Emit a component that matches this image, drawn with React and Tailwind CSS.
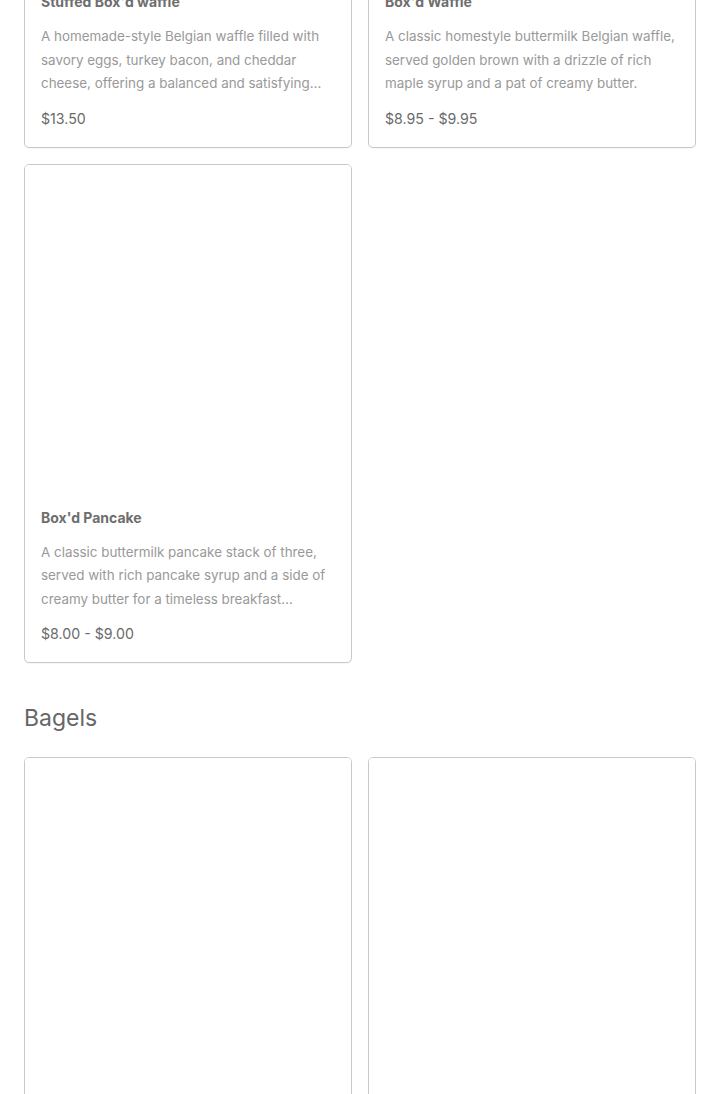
const SECTIONS = [
  {
    name: null,
    items: [
      {
        title: "Stuffed Box'd waffle",
        desc: 'A homemade-style Belgian waffle filled with savory eggs, turkey bacon, and cheddar cheese, offering a balanced and satisfying breakfast in every bite.',
        price: '$13.50',
      },
      {
        title: "Box'd Waffle",
        desc: 'A classic homestyle buttermilk Belgian waffle, served golden brown with a drizzle of rich maple syrup and a pat of creamy butter.',
        price: '$8.95 - $9.95',
      },
      {
        title: "Box'd Pancake",
        desc: 'A classic buttermilk pancake stack of three, served with rich pancake syrup and a side of creamy butter for a timeless breakfast favorite.',
        price: '$8.00 - $9.00',
      },
    ],
  },
  {
    name: 'Bagels',
    items: [
      { title: 'Plain Bagel', desc: 'A freshly baked plain bagel served toasted with your choice of spread.', price: '$3.50' },
      { title: 'Everything Bagel', desc: 'A freshly baked everything bagel served toasted with your choice of spread.', price: '$3.95' },
    ],
  },
]

function MenuCard({ item }) {
  return (
    <div className="border border-[#c9c9c9] rounded-[5px] bg-white overflow-hidden shadow-[0_1px_1px_rgba(0,0,0,0.04)]">
      {/* image slot, not loaded */}
      <div className="aspect-square w-full bg-white" />
      <div className="p-4">
        <div className="text-sm leading-[22px] font-bold text-[#6e6e6e]">{item.title}</div>
        <p className="mt-3 text-[13.4px] leading-[23.5px] text-[#999999] line-clamp-3">{item.desc}</p>
        <div className="mt-[11px] text-[14.2px] leading-[24px] text-[#6a6a6a]">{item.price}</div>
      </div>
    </div>
  )
}

export default function App() {
  return (
    <div className="min-h-screen bg-white overflow-hidden" style={{ fontFamily: 'Inter, "Noto Sans", sans-serif' }}>
      <div className="px-6 mt-[-352px]">
        {SECTIONS.map((s, i) => (
          <section key={i} className={i > 0 ? 'mt-[41px]' : ''}>
            {s.name && (
              <h2 className="text-[23px] leading-[28px] text-[#666666] mb-[25px]">{s.name}</h2>
            )}
            <div className="grid grid-cols-2 gap-4">
              {s.items.map((item) => (
                <MenuCard key={item.title} item={item} />
              ))}
            </div>
          </section>
        ))}
      </div>
    </div>
  )
}
